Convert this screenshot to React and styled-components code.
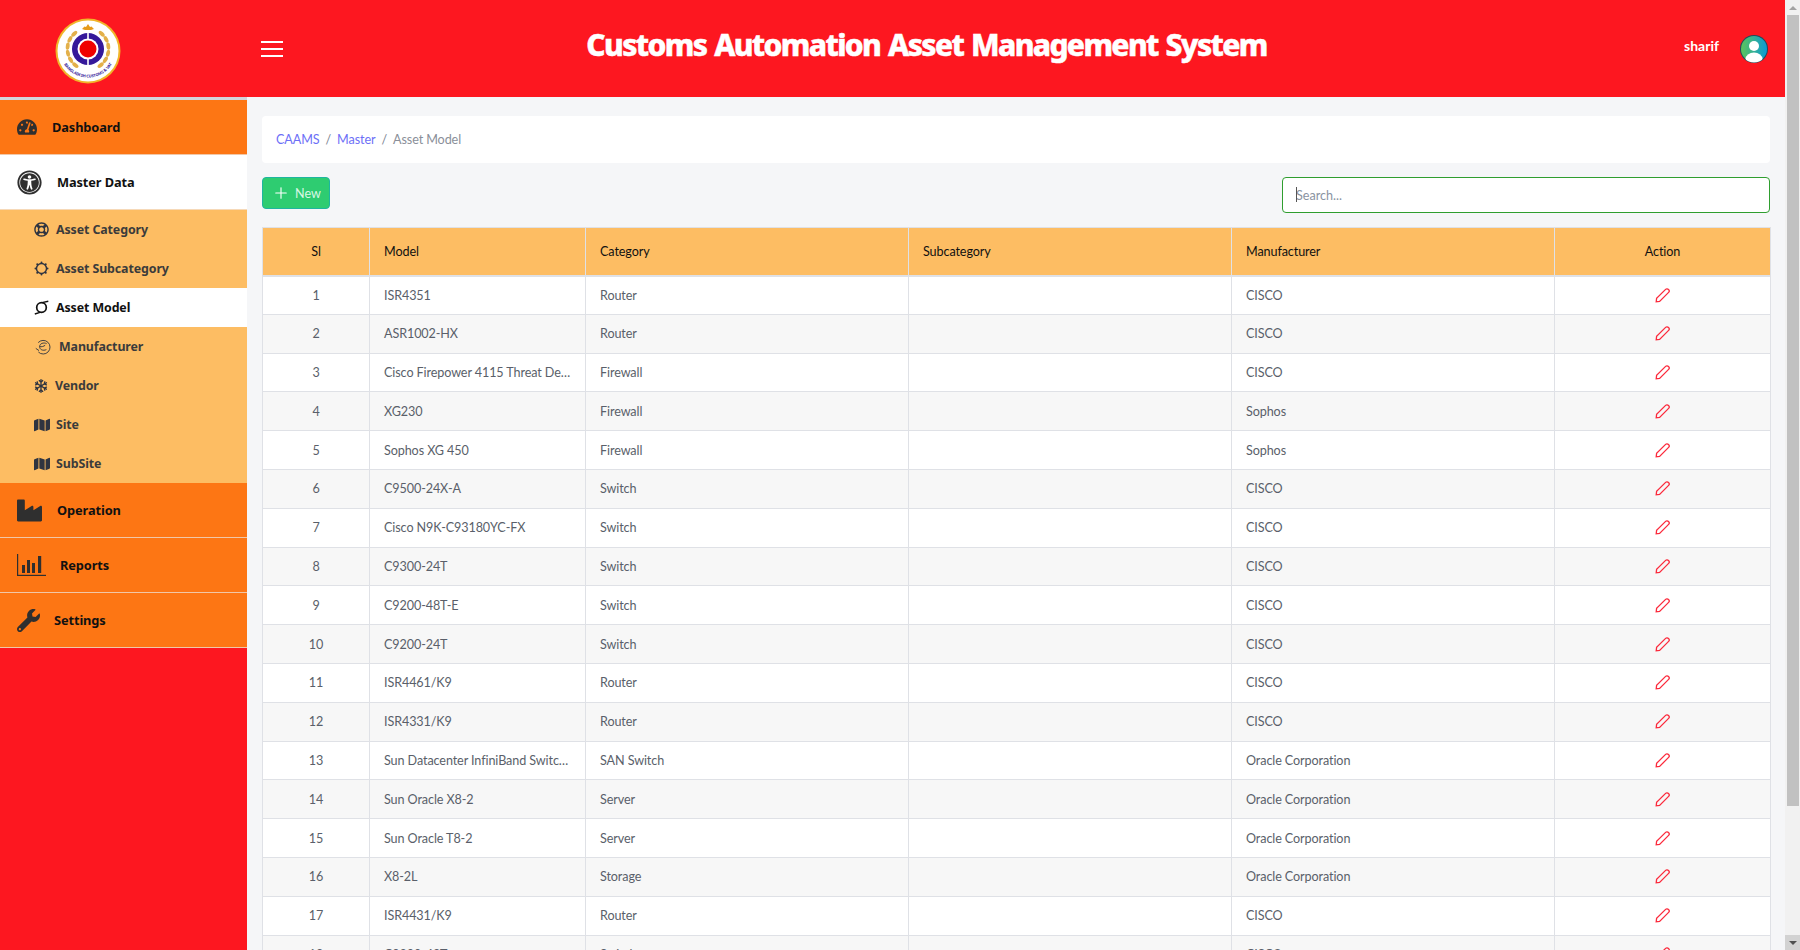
import React from 'react';
import styled, { createGlobalStyle } from 'styled-components';
import {
  FaTachometerAlt,
  FaUniversalAccess,
  FaRegLifeRing,
  FaRegSnowflake,
  FaMap,
  FaIndustry,
  FaWrench,
} from 'react-icons/fa';
import { Plus } from 'lucide-react';

const GlobalStyle = createGlobalStyle`
  html, body { margin: 0; padding: 0; height: 100%; overflow: hidden; }
  body { font-family: Lato, "Open Sans", sans-serif; font-size: 12.6px; letter-spacing: -0.1px; color: #4f5d73; background: #f5f6f8; }
`;

const Shell = styled.div`
  display: flex;
  height: 100vh;
`;

const Page = styled.div`
  flex: 1;
  min-width: 0;
  display: flex;
  flex-direction: column;
  overflow-y: auto;
  scrollbar-width: none;
`;

const ScrollRail = styled.div`
  display: flex;
  flex-direction: column;
  width: 15px;
  flex: none;
  background: #f1f1f1;
`;

const ScrollButton = styled.div`
  display: flex;
  align-items: center;
  justify-content: center;
  height: 15px;
  flex: none;
  background: ${p => (p.$down ? '#d2d2d2' : '#f1f1f1')};
  &::after {
    content: '';
    border-left: 4px solid transparent;
    border-right: 4px solid transparent;
    ${p => (p.$down ? 'border-top: 4px solid #505050;' : 'border-bottom: 4px solid #a3a3a3;')}
  }
`;

const ScrollThumb = styled.div`
  height: 791px;
  margin: 0 1px 0 2px;
  background: #c1c1c1;
`;

const ScrollTrack = styled.div`
  flex: 1;
`;

const Header = styled.header`
  display: flex;
  align-items: center;
  height: 97px;
  flex: none;
  background: #fd1720;
  color: #fff;
`;

const LogoBox = styled.div`
  width: 206px;
  padding: 5px 0 0 55px;
  display: flex;
  flex: none;
`;

const Burger = styled.button`
  display: flex;
  flex-direction: column;
  gap: 5px;
  width: 22px;
  padding: 0;
  margin-top: 1px;
  border: 0;
  background: none;
  flex: none;
  span {
    height: 2px;
    background: #fff;
    display: block;
  }
`;

const Title = styled.h1`
  flex: 1;
  margin: -8px 0 0;
  padding-right: 114px;
  text-align: center;
  font-family: "Noto Sans", sans-serif;
  font-weight: 800;
  font-size: 30px;
  letter-spacing: -1.65px;
  word-spacing: 1.7px;
  -webkit-text-stroke: 0.5px #fff;
`;

const User = styled.div`
  display: flex;
  align-items: center;
  gap: 21px;
  padding-right: 17px;
  font-size: 14px;
  font-weight: 700;
  letter-spacing: 0;
  span { margin-top: -6px; }
`;

const Body = styled.div`
  display: flex;
  flex: 1 0 auto;
`;

const Sidebar = styled.nav`
  width: 247px;
  flex: none;
  background: #fd1720;
  border-top: 3px solid #d3d3da;
`;

const MainItem = styled.a`
  display: flex;
  align-items: center;
  height: 54px;
  padding-left: 17px;
  gap: ${p => p.$gap}px;
  background: ${p => (p.$open ? '#fff' : '#fd7614')};
  border-bottom: 1px solid ${p => (p.$open ? '#f6d9b8' : '#f1c7a8')};
  color: #111;
  font-family: "Noto Sans", sans-serif;
  font-weight: 700;
  font-size: 12.8px;
  svg { color: #2f2f2f; flex: none; }
`;

const SubList = styled.div`
  background: #fdbd63;
`;

const SubItem = styled.a`
  display: flex;
  align-items: center;
  height: 39px;
  padding-left: ${p => p.$left}px;
  gap: ${p => p.$gap}px;
  background: ${p => (p.$active ? '#fff' : 'transparent')};
  color: ${p => (p.$active ? '#111' : '#3b3b3b')};
  font-family: "Noto Sans", sans-serif;
  font-weight: 700;
  font-size: 12.4px;
  svg { flex: none; color: ${p => (p.$active ? '#111' : '#2f3440')}; }
`;

const Main = styled.main`
  flex: 1;
  min-width: 0;
  padding: 19px 15px 30px;
`;

const Breadcrumb = styled.ol`
  display: flex;
  align-items: center;
  gap: 6px;
  height: 47px;
  margin: 0 0 14px;
  padding: 0 14px;
  list-style: none;
  background: #fff;
  border-radius: 4px;
  color: #8a93a2;
`;

const Crumb = styled.li`
  color: ${p => (p.$link ? '#6d6ff7' : '#8a8f99')};
`;

const Slash = styled.li`
  color: #7b8492;
`;

const Toolbar = styled.div`
  display: flex;
  justify-content: space-between;
  align-items: flex-start;
  height: 50px;
`;

const NewButton = styled.button`
  display: flex;
  align-items: center;
  gap: 5px;
  width: 68px;
  height: 32px;
  padding: 0 9px;
  border: 1px solid #1eb5a0;
  border-radius: 4px;
  background: #2ecc71;
  color: #d9f7e4;
  font-family: Lato, sans-serif;
  font-size: 12.6px;
  svg { color: #fff; flex: none; }
`;

const SearchBox = styled.div`
  position: relative;
  width: 488px;
`;

const SearchInput = styled.input`
  display: block;
  width: 100%;
  height: 36px;
  box-sizing: border-box;
  padding: 0 13px;
  border: 1.5px solid #2f9e2f;
  border-radius: 4px;
  background: #fff;
  font-family: Lato, sans-serif;
  font-size: 12.6px;
  outline: none;
  &::placeholder { color: #8a93a2; }
`;

const Caret = styled.span`
  position: absolute;
  left: 14px;
  top: 10px;
  width: 1px;
  height: 15px;
  background: #555;
`;

const Table = styled.table`
  width: 100%;
  table-layout: fixed;
  border-collapse: collapse;
  background: #fff;
`;

const Th = styled.th`
  height: 48px;
  padding: 0 14px;
  box-sizing: border-box;
  background: #fdbd63;
  border: 1px solid #dfe1e6;
  border-bottom-width: 2px;
  color: #111;
  font-weight: 400;
  text-align: ${p => (p.$center ? 'center' : 'left')};
`;

const Row = styled.tr`
  background: ${p => (p.$odd ? '#fff' : '#f7f7f7')};
`;

const Td = styled.td`
  height: 38.8px;
  padding: 0 14px;
  box-sizing: border-box;
  border: 1px solid #dfe1e6;
  color: #5a5f6a;
  text-align: ${p => (p.$center ? 'center' : 'left')};
  white-space: nowrap;
  overflow: hidden;
  text-overflow: ellipsis;
  svg { display: block; margin: 0 auto; }
`;

const Col = styled.col`
  width: ${p => p.$w}px;
`;

function Logo() {
  const leaves = [42, 62, 82, 102, 122, 142, -42, -62, -82, -102, -122, -142];
  return (
    <svg width="66" height="66" viewBox="0 0 66 66">
      <circle cx="33" cy="33" r="32.5" fill="#f1b52a" />
      <circle cx="33" cy="33" r="30.5" fill="#fff" />
      <defs>
        <path id="logoArc" d="M4.5 31 A28.5 28.5 0 0 0 61.5 31" />
      </defs>
      {leaves.map(a => (
        <ellipse key={a} cx="33" cy="10.5" rx="3.6" ry="1.9" fill="#e3b04a" transform={`rotate(${a} 33 31)`} />
      ))}
      <path d="M27 11 L29.5 8.5 L31 9 L33 6 L35 9 L36.5 8.5 L39 11 L36 12 H30 Z" fill="#e69a1a" />
      <circle cx="33" cy="31" r="16" fill="#35189a" />
      <rect x="32.2" y="13" width="1.6" height="36" fill="#fff" />
      <circle cx="33" cy="31" r="10.5" fill="#fff" />
      <circle cx="33" cy="31" r="8.5" fill="#f00000" />
      <text fontFamily="Noto Sans, sans-serif" fontSize="4" fontWeight="700" fill="#35189a">
        <textPath href="#logoArc" startOffset="50%" textAnchor="middle">BANGLADESH CUSTOMS &amp; VAT</textPath>
      </text>
    </svg>
  );
}

function Avatar() {
  return (
    <svg width="28" height="28" viewBox="0 0 28 28">
      <defs>
        <linearGradient id="avatarBg" x1="0" y1="0" x2="1" y2="0">
          <stop offset="0" stopColor="#5cc45a" />
          <stop offset="1" stopColor="#0a9bd6" />
        </linearGradient>
        <clipPath id="avatarClip"><circle cx="14" cy="14" r="13.5" /></clipPath>
      </defs>
      <circle cx="14" cy="14" r="14" fill="#1c4d5c" />
      <circle cx="14" cy="14" r="13" fill="url(#avatarBg)" />
      <g clipPath="url(#avatarClip)">
        <circle cx="14" cy="11" r="5" fill="#fff" />
        <ellipse cx="14" cy="24" rx="8.5" ry="6.5" fill="#fff" />
      </g>
    </svg>
  );
}

function Pencil() {
  return (
    <svg width="15" height="15" viewBox="0 0 15 15" fill="none" stroke="#fb2a3c" strokeWidth="1.3">
      <path d="M1.2 13.8 L1.6 10.4 L10.6 1.4 C11.4 0.6 12.6 0.6 13.5 1.5 C14.4 2.4 14.4 3.6 13.6 4.4 L4.6 13.4 Z" />
    </svg>
  );
}

function SubcategoryIcon() {
  return (
    <svg width="15" height="15" viewBox="0 0 15 15" fill="none" stroke="currentColor">
      <circle cx="7.5" cy="7.5" r="5" strokeWidth="1.4" />
      {[0, 45, 90, 135, 180, 225, 270, 315].map(a => (
        <circle key={a} cx="7.5" cy="1.5" r="1" fill="currentColor" stroke="none" transform={`rotate(${a} 7.5 7.5)`} />
      ))}
    </svg>
  );
}

function ModelIcon() {
  return (
    <svg width="15" height="15" viewBox="0 0 15 15" fill="none" stroke="currentColor">
      <circle cx="7.5" cy="7.5" r="4.8" strokeWidth="1.7" />
      <path d="M8 2.6 L14.3 1.2 M0.8 14 L6 12.4" strokeWidth="1.4" />
    </svg>
  );
}

function ManufacturerIcon() {
  return (
    <svg width="16" height="16" viewBox="0 0 16 16" fill="none" stroke="currentColor" strokeWidth="0.9">
      <path d="M3.2 3.6 A6.8 6.8 0 1 1 3.4 13" />
      <path d="M11.6 4.6 C8.6 3.2 4.8 4.4 4.6 7.4 C4.4 10.6 8 12.2 11.4 10.6 M4.6 7.6 C6.6 8 8.8 7.4 10.2 6.2 M0.8 9.4 L4 11.6" />
    </svg>
  );
}

function ReportsIcon() {
  return (
    <svg width="29" height="22" viewBox="0 0 29 22" fill="#2f2f2f">
      <rect x="0" y="0" width="1.2" height="22" />
      <rect x="0" y="20.8" width="29" height="1.2" />
      <rect x="5" y="11" width="3" height="8" />
      <rect x="10" y="6" width="3" height="13" />
      <rect x="15" y="9" width="3" height="10" />
      <rect x="21" y="2" width="3.2" height="17" />
    </svg>
  );
}

const subItems = [
  { label: 'Asset Category', icon: <FaRegLifeRing size={15} />, left: 34, gap: 7 },
  { label: 'Asset Subcategory', icon: <SubcategoryIcon />, left: 34, gap: 7 },
  { label: 'Asset Model', icon: <ModelIcon />, left: 34, gap: 7, active: true },
  { label: 'Manufacturer', icon: <ManufacturerIcon />, left: 35, gap: 8 },
  { label: 'Vendor', icon: <FaRegSnowflake size={14} />, left: 34, gap: 7 },
  { label: 'Site', icon: <FaMap size={16} />, left: 34, gap: 6 },
  { label: 'SubSite', icon: <FaMap size={16} />, left: 34, gap: 6 },
];

const assets = [
  ['ISR4351', 'Router', 'CISCO'],
  ['ASR1002-HX', 'Router', 'CISCO'],
  ['Cisco Firepower 4115 Threat Defense', 'Firewall', 'CISCO'],
  ['XG230', 'Firewall', 'Sophos'],
  ['Sophos XG 450', 'Firewall', 'Sophos'],
  ['C9500-24X-A', 'Switch', 'CISCO'],
  ['Cisco N9K-C93180YC-FX', 'Switch', 'CISCO'],
  ['C9300-24T', 'Switch', 'CISCO'],
  ['C9200-48T-E', 'Switch', 'CISCO'],
  ['C9200-24T', 'Switch', 'CISCO'],
  ['ISR4461/K9', 'Router', 'CISCO'],
  ['ISR4331/K9', 'Router', 'CISCO'],
  ['Sun Datacenter InfiniBand Switch 36', 'SAN Switch', 'Oracle Corporation'],
  ['Sun Oracle X8-2', 'Server', 'Oracle Corporation'],
  ['Sun Oracle T8-2', 'Server', 'Oracle Corporation'],
  ['X8-2L', 'Storage', 'Oracle Corporation'],
  ['ISR4431/K9', 'Router', 'CISCO'],
  ['C9200-48T', 'Switch', 'CISCO'],
];

export default function App() {
  return (
    <Shell>
      <GlobalStyle />
      <Page>
        <Header>
          <LogoBox><Logo /></LogoBox>
          <Burger aria-label="menu"><span /><span /><span /></Burger>
          <Title>Customs Automation Asset Management System</Title>
          <User>
            <span>sharif</span>
            <Avatar />
          </User>
        </Header>
        <Body>
          <Sidebar>
            <MainItem $gap={15}><FaTachometerAlt size={20} />Dashboard</MainItem>
            <MainItem $gap={15} $open><FaUniversalAccess size={25} />Master Data</MainItem>
            <SubList>
              {subItems.map(item => (
                <SubItem key={item.label} $left={item.left} $gap={item.gap} $active={item.active}>
                  {item.icon}
                  {item.label}
                </SubItem>
              ))}
            </SubList>
            <MainItem $gap={15}><FaIndustry size={25} />Operation</MainItem>
            <MainItem $gap={14}><ReportsIcon />Reports</MainItem>
            <MainItem $gap={14}><FaWrench size={23} />Settings</MainItem>
          </Sidebar>
          <Main>
            <Breadcrumb>
              <Crumb $link>CAAMS</Crumb>
              <Slash>/</Slash>
              <Crumb $link>Master</Crumb>
              <Slash>/</Slash>
              <Crumb>Asset Model</Crumb>
            </Breadcrumb>
            <Toolbar>
              <NewButton><Plus size={18} strokeWidth={1.5} />New</NewButton>
              <SearchBox>
                <SearchInput placeholder="Search..." />
                <Caret />
              </SearchBox>
            </Toolbar>
            <Table>
              <colgroup>
                <Col $w={107} />
                <Col $w={216} />
                <Col $w={323} />
                <Col $w={323} />
                <Col $w={323} />
                <Col $w={216} />
              </colgroup>
              <thead>
                <tr>
                  <Th $center>Sl</Th>
                  <Th>Model</Th>
                  <Th>Category</Th>
                  <Th>Subcategory</Th>
                  <Th>Manufacturer</Th>
                  <Th $center>Action</Th>
                </tr>
              </thead>
              <tbody>
                {assets.map(([model, category, maker], i) => (
                  <Row key={i} $odd={i % 2 === 0}>
                    <Td $center>{i + 1}</Td>
                    <Td>{model}</Td>
                    <Td>{category}</Td>
                    <Td />
                    <Td>{maker}</Td>
                    <Td $center><Pencil /></Td>
                  </Row>
                ))}
              </tbody>
            </Table>
          </Main>
        </Body>
      </Page>
      <ScrollRail>
        <ScrollButton />
        <ScrollThumb />
        <ScrollTrack />
        <ScrollButton $down />
      </ScrollRail>
    </Shell>
  );
}
